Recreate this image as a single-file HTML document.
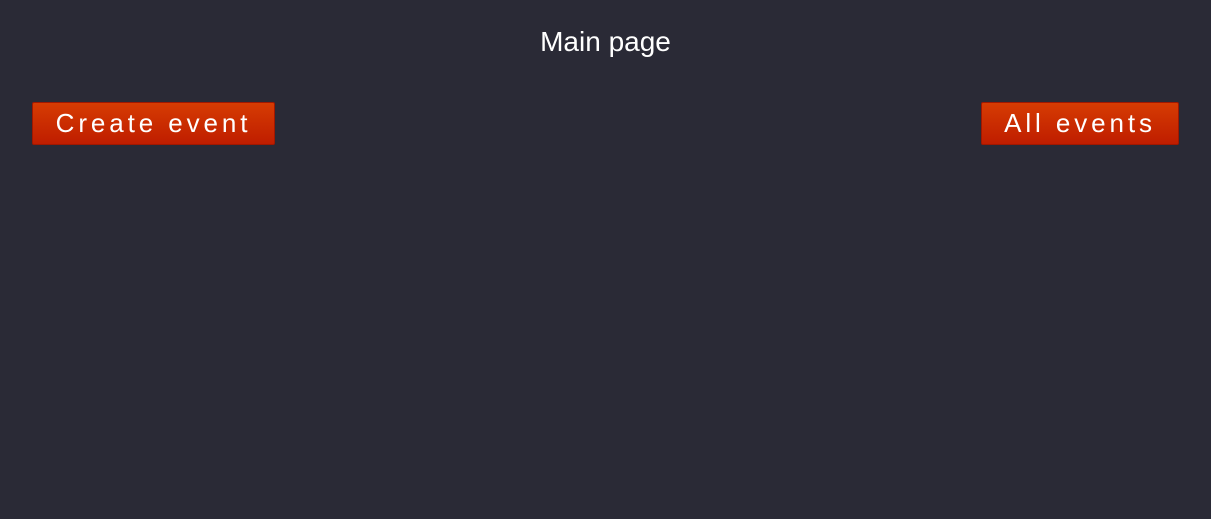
<!DOCTYPE html>
<html><head><style>
body{margin:0;width:1211px;height:519px;background:#2a2a36;font-family:"Liberation Sans",sans-serif;position:relative;overflow:hidden}
h1{position:absolute;top:24px;left:0;width:1211px;margin:0;text-align:center;color:#fff;font-weight:normal;font-size:28px;line-height:36px}
.b{position:absolute;top:102px;height:43px;box-sizing:border-box;border:1px solid #a01800;border-radius:2px;background:linear-gradient(#d63c02,#bf1d00);color:#fff;font-size:26px;letter-spacing:3.9px;line-height:40px;text-align:center}
</style></head><body>
<h1>Main page</h1>
<div class="b" style="left:32px;width:243px">Create event</div>
<div class="b" style="left:981px;width:198px">All events</div>
</body></html>
